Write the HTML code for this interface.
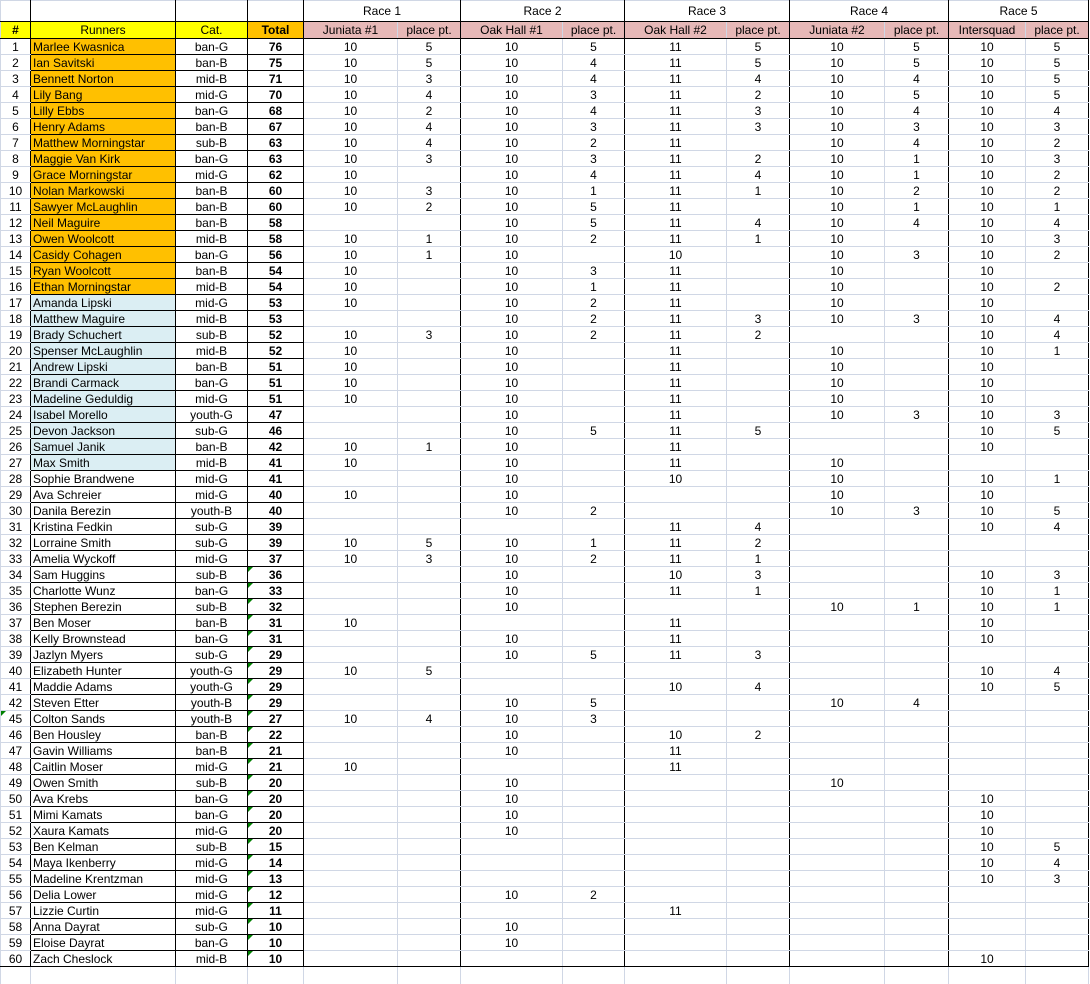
<!DOCTYPE html>
<html><head><meta charset="utf-8">
<style>
html,body{margin:0;padding:0;background:#fff;width:1090px;height:984px;overflow:hidden}
table{border-collapse:collapse;table-layout:fixed;width:1089px;font-family:"Liberation Sans",Arial,sans-serif;font-size:12px;color:#000}
td{border:1px solid #d0d7e5;padding:0;height:15px;line-height:14px;text-align:center;white-space:nowrap;overflow:hidden;position:relative}
td:nth-child(1),td:nth-child(2),td:nth-child(3),td:nth-child(4){border-right:1px solid #000}
tbody td:nth-child(2),tbody td:nth-child(3),tbody td:nth-child(4){border-top:1px solid #000;border-bottom:1px solid #000}
td:nth-child(6),td:nth-child(8),td:nth-child(10),td:nth-child(12),td:nth-child(14){border-right:1px solid #000}
tbody td:nth-child(2){text-align:left;padding-left:2px}
tbody td:nth-child(4){font-weight:bold}
tr.o td:nth-child(2){background:#ffc000}
tr.b td:nth-child(2){background:#dbeef3}
tr.top td{height:20px;border-bottom:1px solid #000}
tr.top td.r{border-right:1px solid #000}
tr.hd td{height:16px;border-top:1px solid #000;border-bottom:1px solid #000;background:#e6b8b7}
tr.hd td.y{background:#ffff00}
tr.hd td.or{background:#ffc000;font-weight:bold}
tr.last td{border-bottom:1px solid #000}
tr.g td:nth-child(4)::before{content:"";position:absolute;left:0;top:0;border-top:5px solid #008000;border-right:5px solid transparent}
td.tri::before{content:"";position:absolute;left:0;top:0;border-top:5px solid #008000;border-right:5px solid transparent}
tr.end td{border-top:1px solid #000;height:17px}
</style></head><body>
<table>
<colgroup><col style="width:30px"><col style="width:145px"><col style="width:72px"><col style="width:56px"><col style="width:94px"><col style="width:63px"><col style="width:102px"><col style="width:62px"><col style="width:102px"><col style="width:63px"><col style="width:95px"><col style="width:64px"><col style="width:77px"><col style="width:63px"></colgroup>
<thead>
<tr class="top"><td></td><td></td><td></td><td></td><td colspan="2" class="r">Race 1</td><td colspan="2" class="r">Race 2</td><td colspan="2" class="r">Race 3</td><td colspan="2" class="r">Race 4</td><td colspan="2" class="r">Race 5</td></tr>
<tr class="hd"><td class="y" style="font-weight:bold">#</td><td class="y">Runners</td><td class="y">Cat.</td><td class="or">Total</td><td>Juniata #1</td><td>place pt.</td><td>Oak Hall #1</td><td>place pt.</td><td>Oak Hall #2</td><td>place pt.</td><td>Juniata #2</td><td>place pt.</td><td>Intersquad</td><td>place pt.</td></tr>
</thead>
<tbody>
<tr class="o"><td>1</td><td>Marlee Kwasnica</td><td>ban-G</td><td>76</td><td>10</td><td>5</td><td>10</td><td>5</td><td>11</td><td>5</td><td>10</td><td>5</td><td>10</td><td>5</td></tr>
<tr class="o"><td>2</td><td>Ian Savitski</td><td>ban-B</td><td>75</td><td>10</td><td>5</td><td>10</td><td>4</td><td>11</td><td>5</td><td>10</td><td>5</td><td>10</td><td>5</td></tr>
<tr class="o"><td>3</td><td>Bennett Norton</td><td>mid-B</td><td>71</td><td>10</td><td>3</td><td>10</td><td>4</td><td>11</td><td>4</td><td>10</td><td>4</td><td>10</td><td>5</td></tr>
<tr class="o"><td>4</td><td>Lily Bang</td><td>mid-G</td><td>70</td><td>10</td><td>4</td><td>10</td><td>3</td><td>11</td><td>2</td><td>10</td><td>5</td><td>10</td><td>5</td></tr>
<tr class="o"><td>5</td><td>Lilly Ebbs</td><td>ban-G</td><td>68</td><td>10</td><td>2</td><td>10</td><td>4</td><td>11</td><td>3</td><td>10</td><td>4</td><td>10</td><td>4</td></tr>
<tr class="o"><td>6</td><td>Henry Adams</td><td>ban-B</td><td>67</td><td>10</td><td>4</td><td>10</td><td>3</td><td>11</td><td>3</td><td>10</td><td>3</td><td>10</td><td>3</td></tr>
<tr class="o"><td>7</td><td>Matthew Morningstar</td><td>sub-B</td><td>63</td><td>10</td><td>4</td><td>10</td><td>2</td><td>11</td><td></td><td>10</td><td>4</td><td>10</td><td>2</td></tr>
<tr class="o"><td>8</td><td>Maggie Van Kirk</td><td>ban-G</td><td>63</td><td>10</td><td>3</td><td>10</td><td>3</td><td>11</td><td>2</td><td>10</td><td>1</td><td>10</td><td>3</td></tr>
<tr class="o"><td>9</td><td>Grace Morningstar</td><td>mid-G</td><td>62</td><td>10</td><td></td><td>10</td><td>4</td><td>11</td><td>4</td><td>10</td><td>1</td><td>10</td><td>2</td></tr>
<tr class="o"><td>10</td><td>Nolan Markowski</td><td>ban-B</td><td>60</td><td>10</td><td>3</td><td>10</td><td>1</td><td>11</td><td>1</td><td>10</td><td>2</td><td>10</td><td>2</td></tr>
<tr class="o"><td>11</td><td>Sawyer McLaughlin</td><td>ban-B</td><td>60</td><td>10</td><td>2</td><td>10</td><td>5</td><td>11</td><td></td><td>10</td><td>1</td><td>10</td><td>1</td></tr>
<tr class="o"><td>12</td><td>Neil Maguire</td><td>ban-B</td><td>58</td><td></td><td></td><td>10</td><td>5</td><td>11</td><td>4</td><td>10</td><td>4</td><td>10</td><td>4</td></tr>
<tr class="o"><td>13</td><td>Owen Woolcott</td><td>mid-B</td><td>58</td><td>10</td><td>1</td><td>10</td><td>2</td><td>11</td><td>1</td><td>10</td><td></td><td>10</td><td>3</td></tr>
<tr class="o"><td>14</td><td>Casidy Cohagen</td><td>ban-G</td><td>56</td><td>10</td><td>1</td><td>10</td><td></td><td>10</td><td></td><td>10</td><td>3</td><td>10</td><td>2</td></tr>
<tr class="o"><td>15</td><td>Ryan Woolcott</td><td>ban-B</td><td>54</td><td>10</td><td></td><td>10</td><td>3</td><td>11</td><td></td><td>10</td><td></td><td>10</td><td></td></tr>
<tr class="o"><td>16</td><td>Ethan Morningstar</td><td>mid-B</td><td>54</td><td>10</td><td></td><td>10</td><td>1</td><td>11</td><td></td><td>10</td><td></td><td>10</td><td>2</td></tr>
<tr class="b"><td>17</td><td>Amanda Lipski</td><td>mid-G</td><td>53</td><td>10</td><td></td><td>10</td><td>2</td><td>11</td><td></td><td>10</td><td></td><td>10</td><td></td></tr>
<tr class="b"><td>18</td><td>Matthew Maguire</td><td>mid-B</td><td>53</td><td></td><td></td><td>10</td><td>2</td><td>11</td><td>3</td><td>10</td><td>3</td><td>10</td><td>4</td></tr>
<tr class="b"><td>19</td><td>Brady Schuchert</td><td>sub-B</td><td>52</td><td>10</td><td>3</td><td>10</td><td>2</td><td>11</td><td>2</td><td></td><td></td><td>10</td><td>4</td></tr>
<tr class="b"><td>20</td><td>Spenser McLaughlin</td><td>mid-B</td><td>52</td><td>10</td><td></td><td>10</td><td></td><td>11</td><td></td><td>10</td><td></td><td>10</td><td>1</td></tr>
<tr class="b"><td>21</td><td>Andrew Lipski</td><td>ban-B</td><td>51</td><td>10</td><td></td><td>10</td><td></td><td>11</td><td></td><td>10</td><td></td><td>10</td><td></td></tr>
<tr class="b"><td>22</td><td>Brandi Carmack</td><td>ban-G</td><td>51</td><td>10</td><td></td><td>10</td><td></td><td>11</td><td></td><td>10</td><td></td><td>10</td><td></td></tr>
<tr class="b"><td>23</td><td>Madeline Geduldig</td><td>mid-G</td><td>51</td><td>10</td><td></td><td>10</td><td></td><td>11</td><td></td><td>10</td><td></td><td>10</td><td></td></tr>
<tr class="b"><td>24</td><td>Isabel Morello</td><td>youth-G</td><td>47</td><td></td><td></td><td>10</td><td></td><td>11</td><td></td><td>10</td><td>3</td><td>10</td><td>3</td></tr>
<tr class="b"><td>25</td><td>Devon Jackson</td><td>sub-G</td><td>46</td><td></td><td></td><td>10</td><td>5</td><td>11</td><td>5</td><td></td><td></td><td>10</td><td>5</td></tr>
<tr class="b"><td>26</td><td>Samuel Janik</td><td>ban-B</td><td>42</td><td>10</td><td>1</td><td>10</td><td></td><td>11</td><td></td><td></td><td></td><td>10</td><td></td></tr>
<tr class="b"><td>27</td><td>Max Smith</td><td>mid-B</td><td>41</td><td>10</td><td></td><td>10</td><td></td><td>11</td><td></td><td>10</td><td></td><td></td><td></td></tr>
<tr><td>28</td><td>Sophie Brandwene</td><td>mid-G</td><td>41</td><td></td><td></td><td>10</td><td></td><td>10</td><td></td><td>10</td><td></td><td>10</td><td>1</td></tr>
<tr><td>29</td><td>Ava Schreier</td><td>mid-G</td><td>40</td><td>10</td><td></td><td>10</td><td></td><td></td><td></td><td>10</td><td></td><td>10</td><td></td></tr>
<tr><td>30</td><td>Danila Berezin</td><td>youth-B</td><td>40</td><td></td><td></td><td>10</td><td>2</td><td></td><td></td><td>10</td><td>3</td><td>10</td><td>5</td></tr>
<tr><td>31</td><td>Kristina Fedkin</td><td>sub-G</td><td>39</td><td></td><td></td><td></td><td></td><td>11</td><td>4</td><td></td><td></td><td>10</td><td>4</td></tr>
<tr><td>32</td><td>Lorraine Smith</td><td>sub-G</td><td>39</td><td>10</td><td>5</td><td>10</td><td>1</td><td>11</td><td>2</td><td></td><td></td><td></td><td></td></tr>
<tr><td>33</td><td>Amelia Wyckoff</td><td>mid-G</td><td>37</td><td>10</td><td>3</td><td>10</td><td>2</td><td>11</td><td>1</td><td></td><td></td><td></td><td></td></tr>
<tr class="g"><td>34</td><td>Sam Huggins</td><td>sub-B</td><td>36</td><td></td><td></td><td>10</td><td></td><td>10</td><td>3</td><td></td><td></td><td>10</td><td>3</td></tr>
<tr class="g"><td>35</td><td>Charlotte Wunz</td><td>ban-G</td><td>33</td><td></td><td></td><td>10</td><td></td><td>11</td><td>1</td><td></td><td></td><td>10</td><td>1</td></tr>
<tr class="g"><td>36</td><td>Stephen Berezin</td><td>sub-B</td><td>32</td><td></td><td></td><td>10</td><td></td><td></td><td></td><td>10</td><td>1</td><td>10</td><td>1</td></tr>
<tr class="g"><td>37</td><td>Ben Moser</td><td>ban-B</td><td>31</td><td>10</td><td></td><td></td><td></td><td>11</td><td></td><td></td><td></td><td>10</td><td></td></tr>
<tr class="g"><td>38</td><td>Kelly Brownstead</td><td>ban-G</td><td>31</td><td></td><td></td><td>10</td><td></td><td>11</td><td></td><td></td><td></td><td>10</td><td></td></tr>
<tr class="g"><td>39</td><td>Jazlyn Myers</td><td>sub-G</td><td>29</td><td></td><td></td><td>10</td><td>5</td><td>11</td><td>3</td><td></td><td></td><td></td><td></td></tr>
<tr class="g"><td>40</td><td>Elizabeth Hunter</td><td>youth-G</td><td>29</td><td>10</td><td>5</td><td></td><td></td><td></td><td></td><td></td><td></td><td>10</td><td>4</td></tr>
<tr class="g"><td>41</td><td>Maddie Adams</td><td>youth-G</td><td>29</td><td></td><td></td><td></td><td></td><td>10</td><td>4</td><td></td><td></td><td>10</td><td>5</td></tr>
<tr class="g"><td>42</td><td>Steven Etter</td><td>youth-B</td><td>29</td><td></td><td></td><td>10</td><td>5</td><td></td><td></td><td>10</td><td>4</td><td></td><td></td></tr>
<tr class="g"><td class="tri">45</td><td>Colton Sands</td><td>youth-B</td><td>27</td><td>10</td><td>4</td><td>10</td><td>3</td><td></td><td></td><td></td><td></td><td></td><td></td></tr>
<tr class="g"><td>46</td><td>Ben Housley</td><td>ban-B</td><td>22</td><td></td><td></td><td>10</td><td></td><td>10</td><td>2</td><td></td><td></td><td></td><td></td></tr>
<tr class="g"><td>47</td><td>Gavin Williams</td><td>ban-B</td><td>21</td><td></td><td></td><td>10</td><td></td><td>11</td><td></td><td></td><td></td><td></td><td></td></tr>
<tr class="g"><td>48</td><td>Caitlin Moser</td><td>mid-G</td><td>21</td><td>10</td><td></td><td></td><td></td><td>11</td><td></td><td></td><td></td><td></td><td></td></tr>
<tr class="g"><td>49</td><td>Owen Smith</td><td>sub-B</td><td>20</td><td></td><td></td><td>10</td><td></td><td></td><td></td><td>10</td><td></td><td></td><td></td></tr>
<tr class="g"><td>50</td><td>Ava Krebs</td><td>ban-G</td><td>20</td><td></td><td></td><td>10</td><td></td><td></td><td></td><td></td><td></td><td>10</td><td></td></tr>
<tr class="g"><td>51</td><td>Mimi Kamats</td><td>ban-G</td><td>20</td><td></td><td></td><td>10</td><td></td><td></td><td></td><td></td><td></td><td>10</td><td></td></tr>
<tr class="g"><td>52</td><td>Xaura Kamats</td><td>mid-G</td><td>20</td><td></td><td></td><td>10</td><td></td><td></td><td></td><td></td><td></td><td>10</td><td></td></tr>
<tr class="g"><td>53</td><td>Ben Kelman</td><td>sub-B</td><td>15</td><td></td><td></td><td></td><td></td><td></td><td></td><td></td><td></td><td>10</td><td>5</td></tr>
<tr class="g"><td>54</td><td>Maya Ikenberry</td><td>mid-G</td><td>14</td><td></td><td></td><td></td><td></td><td></td><td></td><td></td><td></td><td>10</td><td>4</td></tr>
<tr class="g"><td>55</td><td>Madeline Krentzman</td><td>mid-G</td><td>13</td><td></td><td></td><td></td><td></td><td></td><td></td><td></td><td></td><td>10</td><td>3</td></tr>
<tr class="g"><td>56</td><td>Delia Lower</td><td>mid-G</td><td>12</td><td></td><td></td><td>10</td><td>2</td><td></td><td></td><td></td><td></td><td></td><td></td></tr>
<tr class="g"><td>57</td><td>Lizzie Curtin</td><td>mid-G</td><td>11</td><td></td><td></td><td></td><td></td><td>11</td><td></td><td></td><td></td><td></td><td></td></tr>
<tr class="g"><td>58</td><td>Anna Dayrat</td><td>sub-G</td><td>10</td><td></td><td></td><td>10</td><td></td><td></td><td></td><td></td><td></td><td></td><td></td></tr>
<tr class="g"><td>59</td><td>Eloise Dayrat</td><td>ban-G</td><td>10</td><td></td><td></td><td>10</td><td></td><td></td><td></td><td></td><td></td><td></td><td></td></tr>
<tr class="g last"><td>60</td><td>Zach Cheslock</td><td>mid-B</td><td>10</td><td></td><td></td><td></td><td></td><td></td><td></td><td></td><td></td><td>10</td><td></td></tr>
<tr class="end"><td style="border-right-color:#d0d7e5"></td><td style="border-right-color:#d0d7e5;border-bottom-color:#d0d7e5"></td><td style="border-right-color:#d0d7e5;border-bottom-color:#d0d7e5"></td><td style="border-right-color:#d0d7e5;border-bottom-color:#d0d7e5"></td><td></td><td style="border-right-color:#d0d7e5"></td><td></td><td style="border-right-color:#d0d7e5"></td><td></td><td style="border-right-color:#d0d7e5"></td><td></td><td style="border-right-color:#d0d7e5"></td><td></td><td style="border-right-color:#d0d7e5"></td></tr>
</tbody>
</table>
</body></html>
